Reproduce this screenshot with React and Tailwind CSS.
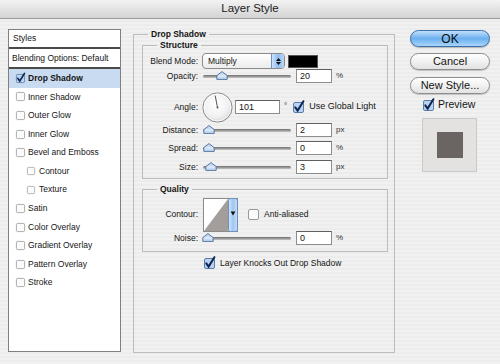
import React from 'react';

const Check = ({ checked, size = 11 }) => (
    <svg width={size} height={size} viewBox="0 0 11 11" className="shrink-0 overflow-visible">
        <rect x="0.5" y="0.5" width="10" height="10" rx="1.5" fill={checked ? '#b9d3f2' : '#fbfbfb'} stroke={checked ? '#5c7ca8' : '#9a9a9a'} />
        {checked && <path d="M2.3 5.4 L4.6 8.6 L10.4 -0.8" stroke="#0f2550" strokeWidth="2" fill="none" strokeLinecap="round" />}
    </svg>
);

const Slider = ({ pos }) => (
    <div className="relative w-[88px] h-[12px] flex items-center shrink-0">
        <div className="w-full h-[3px] rounded-full bg-gradient-to-b from-[#6f6f6f] to-[#c4c4c4]" />
        <svg width="12" height="9" viewBox="0 0 12 9" className="absolute top-[1px]" style={{ left: pos }}>
            <path d="M6 0.6 L11.2 4.6 L11.2 8.4 L0.8 8.4 L0.8 4.6 Z" fill="#c6daf2" stroke="#5877a3" strokeWidth="1" strokeLinejoin="round" />
            <path d="M2 5 L10 5" stroke="#ffffff" strokeWidth="1" opacity="0.7" />
        </svg>
    </div>
);

const Field = ({ value, w = 'w-[36px]' }) => (
    <div className={`${w} h-[14px] bg-white border border-[#8d8d8d] border-t-[#5f5f5f] pl-[3px] leading-[12px] text-[9px] shrink-0`}>
        {value}
    </div>
);

const SliderRow = ({ label, pos, value, unit, className = '' }) => (
    <div className={`flex items-center h-[14px] ${className}`}>
        <div className="w-[56px] text-right pr-[1px]">{label}</div>
        <div className="ml-[4px]"><Slider pos={pos} /></div>
        <div className="ml-[5px]"><Field value={value} /></div>
        <div className="ml-[4px] text-[8px] text-[#333]">{unit}</div>
    </div>
);

const styleItems = [
    { name: 'Drop Shadow', checked: true, active: true },
    { name: 'Inner Shadow' },
    { name: 'Outer Glow' },
    { name: 'Inner Glow' },
    { name: 'Bevel and Emboss' },
    { name: 'Contour', sub: true },
    { name: 'Texture', sub: true },
    { name: 'Satin' },
    { name: 'Color Overlay' },
    { name: 'Gradient Overlay' },
    { name: 'Pattern Overlay' },
    { name: 'Stroke' },
];

const Dial = () => (
    <svg width="31" height="31" viewBox="0 0 31 31" className="shrink-0">
        <defs>
            <radialGradient id="dialFill" cx="0.45" cy="0.4" r="0.6">
                <stop offset="0" stopColor="#ffffff" />
                <stop offset="0.7" stopColor="#f1f1f1" />
                <stop offset="1" stopColor="#d6d6d6" />
            </radialGradient>
        </defs>
        <circle cx="15.5" cy="15.5" r="14.6" fill="url(#dialFill)" stroke="#8a8a8a" strokeWidth="1" />
        <circle cx="15.5" cy="15.5" r="13.4" fill="none" stroke="#ffffff" strokeWidth="0.8" />
        <line x1="15.5" y1="15.5" x2="13.2" y2="3.6" stroke="#555" strokeWidth="1" />
        <circle cx="15.5" cy="15.5" r="1" fill="#555" />
    </svg>
);

const ContourBox = () => (
    <svg width="35" height="34" viewBox="0 0 35 34" className="shrink-0">
        <defs>
            <linearGradient id="ctBtn" x1="0" x2="1" y1="0" y2="0">
                <stop offset="0" stopColor="#d7e8fb" />
                <stop offset="0.5" stopColor="#9fc6f0" />
                <stop offset="1" stopColor="#c7def7" />
            </linearGradient>
        </defs>
        <rect x="0.5" y="0.5" width="34" height="33" fill="#ffffff" stroke="#8a8a8a" />
        <polygon points="1,33 25,1 25,33" fill="#a39d9b" />
        <rect x="25.5" y="0.5" width="9" height="33" rx="2" fill="url(#ctBtn)" stroke="#6f8fbf" />
        <polygon points="27.6,13.5 32.4,13.5 30,17.5" fill="#111" />
    </svg>
);

const App = () => {
    return (
        <div className="w-[500px] h-[364px] overflow-hidden flex flex-col text-[8.5px] text-[#151515] font-['Liberation_Sans',Arial,sans-serif] bg-[repeating-linear-gradient(0deg,#f1f1f1_0px,#f1f1f1_2px,#ececec_2px,#ececec_4px)]">
            {/* Title bar */}
            <div className="h-[19px] shrink-0 flex items-center justify-center bg-gradient-to-b from-[#f3f3f3] to-[#d3d3d3] border-b border-[#9b9b9b] text-[11.5px] text-[#1a1a1a]">
                Layer Style
            </div>

            <div className="flex flex-1">
                {/* Styles list */}
                <div className="ml-[8px] mt-[10px] w-[113px] h-[323px] bg-white border border-[#808080] flex flex-col shrink-0">
                    <div className="h-[19px] flex items-center pl-[4px] border-b-2 border-[#4a4a4a]">Styles</div>
                    <div className="h-[20px] flex items-center pl-[3px] border-b-2 border-[#4a4a4a]">Blending Options: Default</div>
                    {styleItems.map((item) => (
                        <div
                            key={item.name}
                            className={`h-[18.6px] flex items-center gap-[3px] ${item.sub ? 'pl-[18px]' : 'pl-[7px]'} ${item.active ? 'bg-[#c9dbf1] font-bold' : ''}`}
                        >
                            <Check checked={item.checked} size={item.sub ? 8 : 9} />
                            <span className={item.sub ? 'ml-[1px]' : ''}>{item.name}</span>
                        </div>
                    ))}
                </div>

                {/* Drop Shadow settings */}
                <fieldset className="ml-[12px] mt-[10px] w-[262px] h-[324px] border border-[#bcbcbc] shrink-0">
                    <legend className="ml-[14px] px-[3px] font-bold leading-[10px]">Drop Shadow</legend>

                    <fieldset className="ml-[8px] mt-[1px] w-[246px] border border-[#bcbcbc] pb-[4px]">
                        <legend className="ml-[14px] px-[3px] font-bold leading-[10px]">Structure</legend>

                        <div className="flex items-center h-[16px] mt-[3px]">
                            <div className="w-[56px] text-right pr-[1px]">Blend Mode:</div>
                            <div className="ml-[3px] w-[83px] h-[16px] flex rounded-[4px] border border-[#8c8c8c] bg-gradient-to-b from-white to-[#ececec] overflow-hidden">
                                <div className="flex-1 pl-[5px] leading-[14px]">Multiply</div>
                                <div className="w-[13px] border-l border-[#6f8fbf] bg-gradient-to-r from-[#cde2fa] via-[#8fbcef] to-[#bcd7f6] flex flex-col items-center justify-center gap-[1px]">
                                    <svg width="5" height="3" viewBox="0 0 5 3"><polygon points="0,3 5,3 2.5,0" fill="#111" /></svg>
                                    <svg width="5" height="3" viewBox="0 0 5 3"><polygon points="0,0 5,0 2.5,3" fill="#111" /></svg>
                                </div>
                            </div>
                            <div className="ml-[3px] w-[30px] h-[13px] bg-black border border-[#555]" />
                        </div>

                        <SliderRow label="Opacity:" pos={13} value="20" unit="%" />

                        <div className="flex items-center h-[32px] mt-[8px]">
                            <div className="w-[56px] text-right pr-[1px]">Angle:</div>
                            <div className="ml-[3px]"><Dial /></div>
                            <div className="ml-[2px]"><Field value="101" w="w-[45px]" /></div>
                            <div className="ml-[4px] self-start mt-[9px] text-[8px]">°</div>
                            <div className="ml-[6px] flex items-center gap-[5px]">
                                <Check checked size={11} />
                                <span className="text-[9px]">Use Global Light</span>
                            </div>
                        </div>

                        <SliderRow label="Distance:" pos={0} value="2" unit="px" />
                        <SliderRow label="Spread:" pos={0} value="0" unit="%" className="mt-[4px]" />
                        <SliderRow label="Size:" pos={2} value="3" unit="px" className="mt-[5px]" />
                    </fieldset>

                    <fieldset className="ml-[8px] mt-[5px] w-[246px] border border-[#bcbcbc] pb-[6px]">
                        <legend className="ml-[14px] px-[3px] font-bold leading-[10px]">Quality</legend>

                        <div className="flex items-center h-[33px] mt-[4px]">
                            <div className="w-[56px] text-right pr-[1px]">Contour:</div>
                            <div className="ml-[4px]"><ContourBox /></div>
                            <div className="ml-[10px] flex items-center gap-[5px]">
                                <Check size={11} />
                                <span>Anti-aliased</span>
                            </div>
                        </div>

                        <SliderRow label="Noise:" pos={-1} value="0" unit="%" className="h-[12px]" />
                    </fieldset>

                    <div className="flex items-center h-[12px] mt-[5px] pl-[70px] gap-[5px]">
                        <Check checked size={11} />
                        <span>Layer Knocks Out Drop Shadow</span>
                    </div>
                </fieldset>

                {/* Buttons */}
                <div className="ml-[15px] mt-[11px] w-[80px] flex flex-col items-stretch shrink-0">
                    <div className="h-[17px] rounded-full border border-[#3d6fa8] bg-gradient-to-b from-[#c3e0fb] via-[#6cb0ef] to-[#a7d5fb] flex items-center justify-center text-[12px] text-[#0b0b0b] shadow-[0_1px_1px_rgba(0,0,0,0.25)]">
                        OK
                    </div>
                    <div className="h-[17px] mt-[6px] rounded-full border border-[#8e8e8e] bg-gradient-to-b from-white via-[#f1f1f1] to-[#e2e2e2] flex items-center justify-center text-[11px] shadow-[0_1px_1px_rgba(0,0,0,0.2)]">
                        Cancel
                    </div>
                    <div className="h-[17px] mt-[7px] rounded-full border border-[#8e8e8e] bg-gradient-to-b from-white via-[#f1f1f1] to-[#e2e2e2] flex items-center justify-center text-[11px] shadow-[0_1px_1px_rgba(0,0,0,0.2)]">
                        New Style...
                    </div>
                    <div className="mt-[5px] ml-[13px] flex items-center gap-[4px] h-[12px]">
                        <Check checked size={11} />
                        <span className="text-[10.5px]">Preview</span>
                    </div>
                    <div className="mt-[7px] ml-[12px] w-[55px] h-[54px] bg-[#e4e2e1] border border-[#c9c9c9] flex items-center justify-center">
                        <div className="w-[26px] h-[26px] bg-[#6a6462]" />
                    </div>
                </div>
            </div>
        </div>
    );
};

export default App;
